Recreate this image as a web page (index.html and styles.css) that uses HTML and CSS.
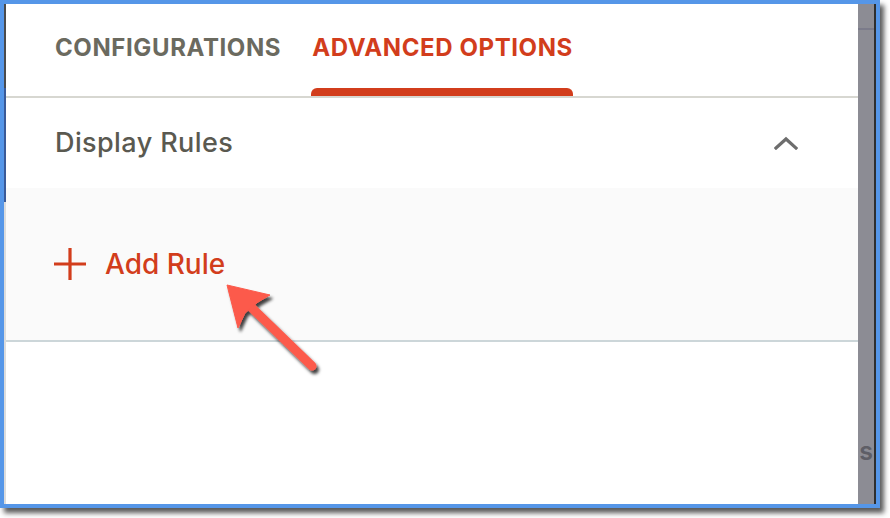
FILE: index.html
```html
<!DOCTYPE html>
<html lang="en">
<head>
<meta charset="utf-8">
<title>Advanced Options</title>
<link rel="stylesheet" href="styles.css">
</head>
<body>
<div class="frame">
  <div class="edge-left">
    <div class="edge-a"></div>
    <div class="edge-b"></div>
    <div class="edge-c"></div>
  </div>
  <div class="panel">
    <div class="tabs">
      <div class="tab">CONFIGURATIONS</div>
      <div class="tab active">ADVANCED OPTIONS</div>
    </div>
    <div class="section-head">
      <div class="section-title">Display Rules</div>
      <svg class="chevron" width="24" height="14" viewBox="0 0 24 14"><path d="M2 12 L12 3 L22 12" fill="none" stroke="#6d6d6d" stroke-width="3.2" stroke-linecap="square"/></svg>
    </div>
    <div class="section-body">
      <div class="add-rule">
        <svg class="plus" width="34" height="34" viewBox="0 0 34 34"><path d="M17 1 V33 M1 17 H33" stroke="#d23d1c" stroke-width="3.2"/></svg>
        <span>Add Rule</span>
      </div>
    </div>
    <div class="rest"></div>
  </div>
  <div class="edge-right">
    <div class="edge-line"></div>
    <div class="edge-text">s</div>
  </div>
  <div class="edge-dark"></div>
  <svg class="pointer" width="890" height="518" viewBox="0 0 890 518">
    <defs>
      <filter id="sh" x="-20%" y="-20%" width="150%" height="150%">
        <feDropShadow dx="2.5" dy="3.5" stdDeviation="1.8" flood-color="#000" flood-opacity="0.75"/>
      </filter>
    </defs>
    <g filter="url(#sh)" fill="#fc5a4b" stroke="#fc5a4b">
      <line x1="252" y1="308" x2="312" y2="366" stroke-width="9" stroke-linecap="round"/>
      <polygon points="227,285 270,295 258,302 245,313 238,328" stroke-width="1" stroke-linejoin="round"/>
    </g>
  </svg>
</div>
</body>
</html>
```
FILE: styles.css
```css
html, body {
  margin: 0;
  padding: 0;
  background: #ffffff;
}
body {
  width: 890px;
  height: 518px;
  overflow: hidden;
  font-family: Inter, "Noto Sans", sans-serif;
}
.frame {
  position: relative;
  width: 872px;
  height: 500px;
  border: 4px solid #5596e8;
  display: flex;
  box-shadow: 4px 5px 5px rgba(0, 0, 0, 0.65);
}
.edge-left {
  width: 2px;
  display: flex;
  flex-direction: column;
}
.edge-a { height: 84px; background: #4b4b4b; }
.edge-b { height: 114px; background: #3a5a98; }
.edge-c { flex: 1; background: #dcdcdc; }
.panel {
  width: 852px;
  display: flex;
  flex-direction: column;
  background: #ffffff;
}
.tabs {
  height: 92px;
  border-bottom: 2px solid #d7d7d1;
  display: flex;
  padding-left: 49px;
  gap: 31px;
  box-sizing: content-box;
}
.tab {
  position: relative;
  font-weight: 700;
  font-size: 24px;
  letter-spacing: 0.6px;
  color: #6b6a5f;
  padding-top: 30px;
  line-height: 28px;
}
.tab.active {
  color: #d23d1c;
}
.tab.active::after {
  content: "";
  position: absolute;
  left: -1px;
  right: 0;
  bottom: 0;
  height: 8px;
  background: #d23d1c;
  border-radius: 6px 6px 0 0;
}
.section-head {
  height: 90px;
  display: flex;
  align-items: center;
  justify-content: space-between;
  padding: 0 60px 0 49px;
}
.section-title {
  font-size: 27px;
  font-weight: 500;
  letter-spacing: 0.4px;
  color: #5a5950;
  padding-bottom: 2px;
}
.chevron {
  display: block;
}
.section-body {
  height: 152px;
  background: #fafafa;
  border-bottom: 2px solid #ccd6d9;
  display: flex;
  align-items: center;
  padding-left: 47px;
}
.add-rule {
  display: flex;
  align-items: center;
  gap: 18px;
  color: #d23d1c;
  font-size: 28px;
  font-weight: 500;
}
.plus {
  display: block;
}
.rest {
  flex: 1;
}
.edge-right {
  width: 16px;
  background: #8c8c94;
  position: relative;
  overflow: hidden;
}
.edge-line {
  margin-top: 24px;
  height: 2px;
  background: #7b7b8a;
}
.edge-text {
  position: absolute;
  top: 433px;
  right: 1px;
  font-size: 25px;
  font-weight: 600;
  color: #5e5e66;
  line-height: 28px;
}
.edge-dark {
  width: 2px;
  background: #2e2e2e;
}
.pointer {
  position: absolute;
  left: -4px;
  top: -4px;
  pointer-events: none;
}
```
